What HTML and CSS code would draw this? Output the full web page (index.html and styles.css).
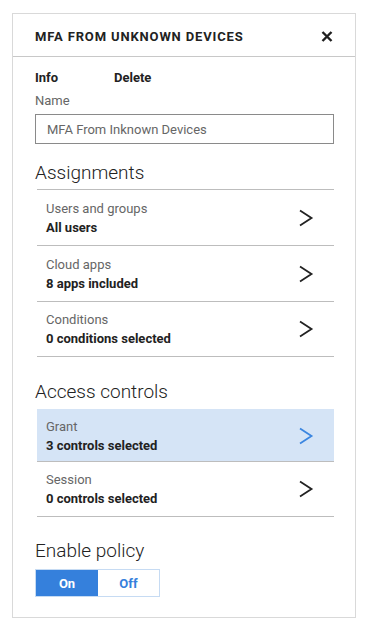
FILE: index.html
```html
<!DOCTYPE html>
<html lang="en">
<head>
    <meta charset="UTF-8">
    <meta name="viewport" content="width=device-width, initial-scale=1.0">
    <title>MFA From Unknown Devices</title>
    <link rel="stylesheet" href="styles.css">
</head>
<body>
    <div class="panel">
        <div class="panel-header">
            <h1>MFA From Unknown Devices</h1>
            <svg class="close" width="12" height="11" viewBox="0 0 12 11">
                <path d="M1.5 1 L10.5 10 M10.5 1 L1.5 10" stroke="#1f1f1f" stroke-width="2.4" fill="none"/>
            </svg>
        </div>

        <div class="panel-body">
            <div class="tabs">
                <span>Info</span>
                <span>Delete</span>
            </div>
            <label class="field-label" for="name">Name</label>
            <input type="text" id="name" class="name-input" value="MFA From Inknown Devices">

            <h2 class="section-title">Assignments</h2>
            <div class="list">
                <div class="row">
                    <div>
                        <div class="row-label">Users and groups</div>
                        <div class="row-value">All users</div>
                    </div>
                    <svg class="chev" width="16" height="18" viewBox="0 0 16 18"><path d="M2 1.5 L13.5 9 L2 16.5" stroke="#222" stroke-width="1.8" fill="none"/></svg>
                </div>
                <div class="row">
                    <div>
                        <div class="row-label">Cloud apps</div>
                        <div class="row-value">8 apps included</div>
                    </div>
                    <svg class="chev" width="16" height="18" viewBox="0 0 16 18"><path d="M2 1.5 L13.5 9 L2 16.5" stroke="#222" stroke-width="1.8" fill="none"/></svg>
                </div>
                <div class="row">
                    <div>
                        <div class="row-label">Conditions</div>
                        <div class="row-value">0 conditions selected</div>
                    </div>
                    <svg class="chev" width="16" height="18" viewBox="0 0 16 18"><path d="M2 1.5 L13.5 9 L2 16.5" stroke="#222" stroke-width="1.8" fill="none"/></svg>
                </div>
            </div>

            <h2 class="section-title access">Access controls</h2>
            <div class="list">
                <div class="row selected">
                    <div>
                        <div class="row-label">Grant</div>
                        <div class="row-value">3 controls selected</div>
                    </div>
                    <svg class="chev" width="16" height="18" viewBox="0 0 16 18"><path d="M2 1.5 L13.5 9 L2 16.5" stroke="#3b86e0" stroke-width="1.8" fill="none"/></svg>
                </div>
                <div class="row">
                    <div>
                        <div class="row-label">Session</div>
                        <div class="row-value">0 controls selected</div>
                    </div>
                    <svg class="chev" width="16" height="18" viewBox="0 0 16 18"><path d="M2 1.5 L13.5 9 L2 16.5" stroke="#222" stroke-width="1.8" fill="none"/></svg>
                </div>
            </div>

            <h2 class="section-title enable">Enable policy</h2>
            <div class="toggle">
                <button class="on">On</button>
                <button class="off">Off</button>
            </div>
        </div>
    </div>
</body>
</html>
```

FILE: styles.css
```css
body {
    margin: 0;
    padding: 13px 0 0 12px;
    font-family: Roboto, 'Liberation Sans', sans-serif;
    background: #ffffff;
    color: #222;
}

.panel {
    width: 342px;
    height: 603px;
    border: 1px solid #d9d9d9;
}

.panel-header {
    height: 42px;
    border-bottom: 1px solid #c8c8c8;
    display: flex;
    align-items: center;
    justify-content: space-between;
    padding: 0 22px;
}

.panel-header h1 {
    margin: 0;
    font-size: 13px;
    font-weight: 700;
    text-transform: uppercase;
    letter-spacing: 0.85px;
    color: #222;
    padding-top: 3px;
}

.close {
    margin-top: 2px;
}

.panel-body {
    padding: 12px 21px 0 22px;
}

.tabs {
    display: flex;
    font-size: 13px;
    font-weight: 700;
    line-height: 18px;
    color: #222;
}

.tabs span:first-child {
    width: 79px;
}

.field-label {
    display: block;
    margin-top: 5px;
    font-size: 13px;
    line-height: 18px;
    color: #666;
}

.name-input {
    display: block;
    width: 100%;
    height: 30px;
    margin-top: 4px;
    box-sizing: border-box;
    border: 1px solid #8a8a8a;
    padding: 0 11px;
    font-family: Roboto, 'Liberation Sans', sans-serif;
    font-size: 13px;
    color: #666;
    outline: none;
}

.section-title {
    margin: 17px 0 4px;
    font-size: 19px;
    font-weight: 300;
    line-height: 24px;
    color: #222;
}

.section-title.access {
    margin-top: 23px;
    margin-bottom: 5px;
}

.section-title.enable {
    margin-top: 22px;
    margin-bottom: 6px;
}

.list {
    margin-left: 2px;
}

.row {
    display: flex;
    align-items: center;
    justify-content: space-between;
    height: 56px;
    box-sizing: border-box;
    padding: 0 20px 0 9px;
    border-top: 1px solid #bdbdbd;
}

.list .row:last-child {
    border-bottom: 1px solid #bdbdbd;
}

.row.selected {
    height: 52px;
    background: #d5e4f6;
    border-top-color: #d5e4f6;
}

.row-label {
    font-size: 13px;
    line-height: 19px;
    color: #666;
}

.row-value {
    font-size: 13px;
    line-height: 19px;
    font-weight: 700;
    color: #222;
}

.chev {
    display: block;
}

.toggle {
    display: flex;
    width: 125px;
    height: 28px;
    border: 1px solid #c6dbf3;
    box-sizing: border-box;
}

.toggle button {
    border: none;
    font-family: Roboto, 'Liberation Sans', sans-serif;
    font-size: 13px;
    font-weight: 700;
    padding: 0;
    cursor: pointer;
}

.toggle .on {
    width: 62px;
    background: #3580dc;
    color: #ffffff;
}

.toggle .off {
    flex: 1;
    background: #ffffff;
    color: #3580dc;
}
```
